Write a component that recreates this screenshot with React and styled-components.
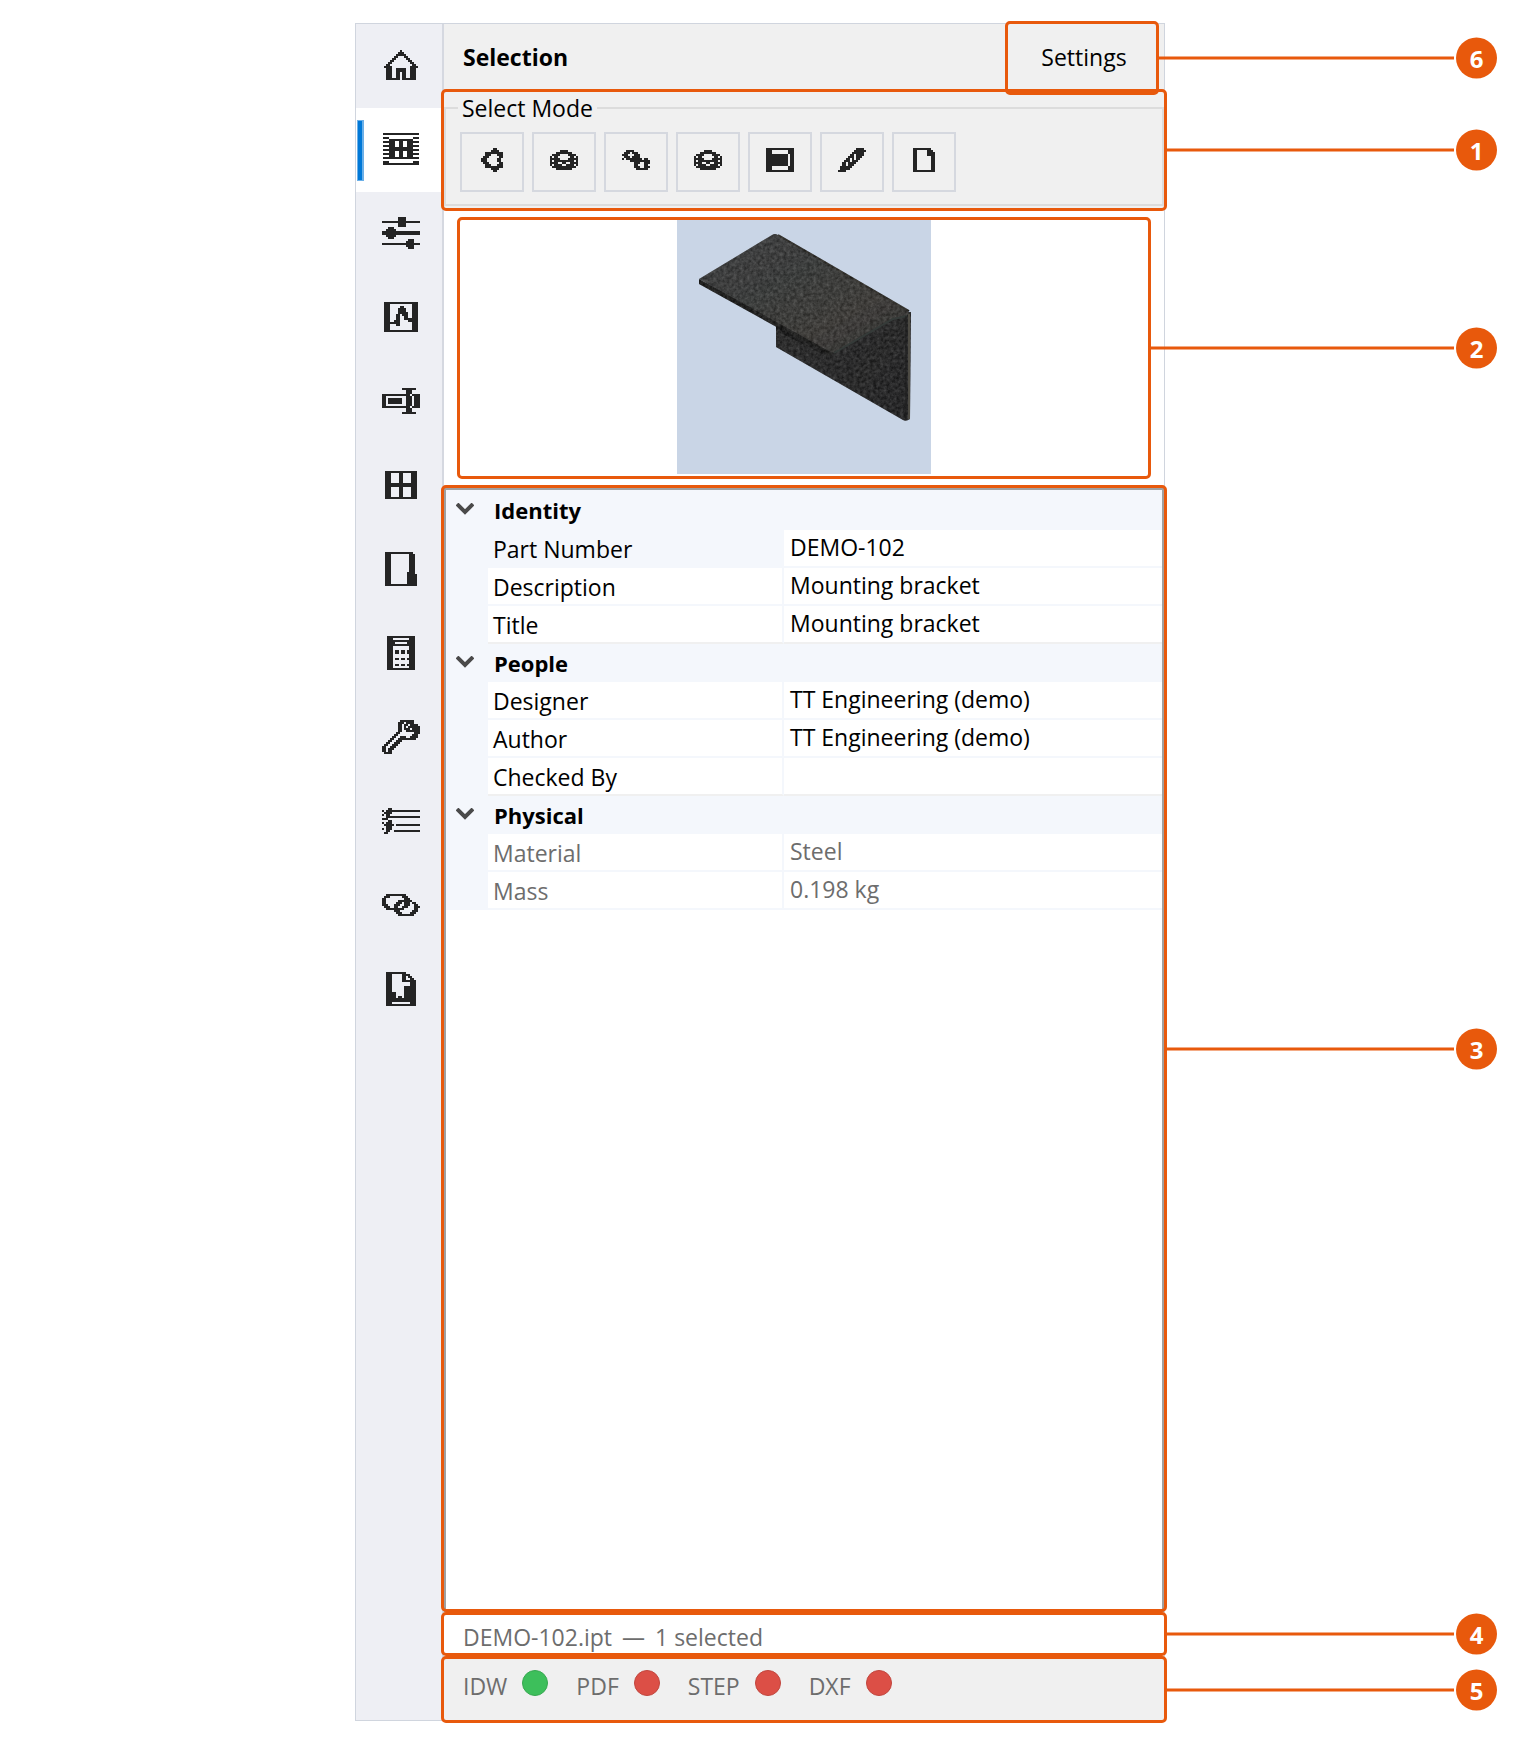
import React from "react";
import styled, { createGlobalStyle } from "styled-components";

const ORANGE = "#e8590c";
const FONT = '"Open Sans", "Noto Sans", sans-serif';

const GlobalStyle = createGlobalStyle`
  *, *::before, *::after { box-sizing: border-box; }
  body { margin: 0; background: #fff; color: #000; font: 23px/30px ${FONT}; }
  button { font: inherit; color: inherit; cursor: pointer; }
`;

/* Each icon is a one-bit glyph: "#" is an inked cell. */
const GLYPHS = {
  home: `
........#........
.......###.......
......#####......
.....##...##.....
....##.....##....
...##.......##...
..##.........##..
.##...........##.
####.........####
.###..#####..###.
.###..#####..###.
.###..##.##..###.
.###..##.##..###.
.###..##.##..###.
.#######.#######.`,
  selection: `
##################
..................
###............###
...############...
######..##..######
...###..##..###...
######..##..######
...############...
##################
...###..##..###...
######..##..######
...###..##..###...
##################
..................
###............###
##################`,
  sliders: `
........####.......
........####.......
###################
........####.......
........####.......
...###.............
..#####............
###################
###################
..#####............
...###.............
.............###...
............####...
###################
............####...
.............###...`,
  chart: `
#################
###...........###
###.....##....###
###....####...###
###....####...###
###....#####..###
###...##.###..###
###...##..##..###
###...##..#######
###..###....#####
########......###
###...##......###
###...........###
###...........###
#################`,
  rename: `
..........#######..
............###....
............###....
##############.####
##..........###.###
##.#######..###.###
##.#######..###.###
##.#######..###.###
##..........###.###
##############.####
............###....
............###....
..........#######..`,
  grid: `
################
###....##....###
###....##....###
###....##....###
###....##....###
###....##....###
################
################
###....##....###
###....##....###
###....##....###
###....##....###
###....##....###
################`,
  sheet: `
##############..
###.........###.
###.........###.
###.........###.
###.........###.
###.........###.
###.........###.
###.........###.
###.........###.
###.........###.
###........####.
###........#####
###........#####
###........#####
###........#####
###........#####
################`,
  calculator: `
##############
###........###
##############
####......####
##############
###........###
###........###
###.##.##.####
###.##.##.####
###........###
###........###
###.##.##.####
###........###
###........###
###.##.##.####
###........###
##############`,
  wrench: `
.........#######...
........###.####...
........##.##.####.
........##.#.######
........##.###.####
........##..#######
.......##.......###
......##.......###.
.....##..###..####.
....##..#########..
...##..###.........
..##..###..........
.##..###...........
##..###............
##.###.............
##.##..............
.####..............`,
  list: `
...##..............
#.#################
.####..............
#.##...............
..#################
###................
...##..............
#.###..............
.#####.############
..###..............
#.###..............
..##..#############
.##................`,
  link: `
..##########.......
.###......###......
##.........###.....
##......#######....
##.....###.###.##..
###...###..###..##.
.###..##..###...###
..#########.....##.
......###......###.
.......###....###..
........########...`,
  report: `
##########.....
###.....####...
###.....##.##..
###.....##..##.
###.....#######
###.........###
###.........###
###......######
###......######
###......######
#####....######
#####....######
#####.##.######
###############
###############
###.........###
###############`,
  part: `
......##...
.....####..
..#########
..###...###
.###.....##
###.....##.
###.....##.
.###.....##
..###...###
..#########
.....####..
......##...`,
  stack: `
.....####.....
...########...
.####....####.
#.##......##.#
#####....#####
#.##########.#
####..##..####
#.####..####.#
.############.
...########...`,
  chain: `
..####........
.###.###......
###...###.....
.###.####.....
#.########.##.
....##########
......###..###
......##...##.
......###..###
.......######.`,
  film: `
##############
###........###
###........###
###########.##
###########.##
###########.##
###########.##
###########.##
###########.##
###........###
###........###
##############`,
  pencil: `
.........####.
........######
.......######.
......##.####.
.....###.###..
....##.#.##...
...###.###....
..##.####.....
..##.###......
.######.......
.#####........
####..........`,
  page: `
#########..
##.....###.
##.....####
##.....####
##.......##
##.......##
##.......##
##.......##
##.......##
##.......##
##.......##
###########`,
};

const Glyph = styled.svg`
  display: block;
  flex: none;
  fill: #242424;
  shape-rendering: crispEdges;
`;

function Icon({ name }) {
  const rows = GLYPHS[name].trim().split("\n");
  const width = rows[0].length;
  let d = "";
  rows.forEach((row, y) => {
    for (const run of row.matchAll(/#+/g)) {
      d += `M${run.index} ${y}h${run[0].length}v1h-${run[0].length}z`;
    }
  });
  return (
    <Glyph width={width * 2} height={rows.length * 2} viewBox={`0 0 ${width} ${rows.length}`} aria-hidden="true">
      <path d={d} />
    </Glyph>
  );
}

/* ---- Numbered callouts laid over the regions ---- */
const CalloutBox = styled.div`
  position: absolute;
  inset: ${(p) => p.$inset};
  border: 3px solid ${ORANGE};
  border-radius: 5px;
  pointer-events: none;
  z-index: 1;
`;
const Leader = styled.div`
  position: absolute;
  left: 100%;
  top: 50%;
  transform: translateY(-50%);
  display: flex;
  align-items: center;
  gap: 2px;
`;
const LeaderLine = styled.span`
  width: ${(p) => p.$reach}px;
  height: 3px;
  background: ${ORANGE};
`;
const Badge = styled.span`
  width: 41px;
  height: 41px;
  border-radius: 50%;
  background: ${ORANGE};
  color: #fff;
  font-size: 24px;
  font-weight: 700;
  line-height: 42px;
  text-align: center;
`;

function Callout({ number, inset, reach = 290 }) {
  return (
    <CalloutBox $inset={inset}>
      <Leader>
        <LeaderLine $reach={reach} />
        <Badge>{number}</Badge>
      </Leader>
    </CalloutBox>
  );
}

/* ---- Window frame ---- */
const Page = styled.div`
  padding: 23px 355px;
`;
const Panel = styled.div`
  display: flex;
  min-height: calc(100vh - 46px);
  border: 1px solid #d0d5de;
`;
const Nav = styled.nav`
  flex: none;
  width: 88px;
  background: #eeeff4;
  border-right: 2px solid #d5d8e0;
`;
const NavButton = styled.button`
  display: flex;
  align-items: center;
  justify-content: center;
  width: 100%;
  height: 84px;
  padding: 0 0 2px 3px;
  border: 0;
  position: relative;
  background: ${(p) => (p.$active ? "#fff" : "transparent")};
  &::before {
    content: "";
    display: ${(p) => (p.$active ? "block" : "none")};
    position: absolute;
    left: 1px;
    top: 12px;
    bottom: 11px;
    width: 7px;
    background: #0078d7;
    border: solid #6cb0e8;
    border-width: 1px 2px 1px 1px;
  }
`;
const Main = styled.main`
  flex: 1;
  min-width: 0;
  display: flex;
  flex-direction: column;
`;

const Header = styled.header`
  display: flex;
  justify-content: space-between;
  height: 66px;
  padding: 0 8px 0 19px;
  background: #f0f0f0;
`;
const Title = styled.h1`
  margin: 0;
  font-size: 23px;
  font-weight: 700;
  line-height: 66px;
`;
const SettingsSlot = styled.div`
  position: relative;
  display: flex;
  z-index: 2;
`;
const SettingsButton = styled.button`
  width: 148px;
  padding: 0 0 0 4px;
  border: 0;
  background: transparent;
`;

/* ---- Select mode ---- */
const ModeSection = styled.section`
  position: relative;
  padding: 3px 0 5px;
  background: #f0f0f0;
`;
const ModeGroup = styled.fieldset`
  margin: 0;
  padding: 9px 14px 12px;
  border: 2px solid #dcdcdc;
  min-width: 0;
`;
const ModeLegend = styled.legend`
  padding: 0 4px;
  margin-left: -2px;
`;
const ModeButtons = styled.div`
  display: flex;
  gap: 8px;
`;
const ModeButton = styled.button`
  display: flex;
  align-items: center;
  justify-content: center;
  width: 64px;
  height: 60px;
  padding: 0 0 4px;
  border: 2px solid #d5d8df;
  background: #f0f0f0;
`;

/* ---- Preview ---- */
const PreviewSection = styled.section`
  position: relative;
  display: flex;
  justify-content: center;
  padding: 9px 0 11px;
  background: #fff;
`;
const Thumbnail = styled.svg`
  display: block;
  background: #c9d5e6;
`;

function BracketPreview() {
  return (
    <Thumbnail width="254" height="254" viewBox="0 0 254 254" role="img" aria-label="Mounting bracket preview">
      <defs>
        <linearGradient id="topFace" x1="0" y1="0" x2="1" y2="1">
          <stop offset="0" stopColor="#3e3e40" />
          <stop offset="0.4" stopColor="#383a39" />
          <stop offset="0.7" stopColor="#3d3a37" />
          <stop offset="1" stopColor="#2b2d2c" />
        </linearGradient>
        <linearGradient id="sideFace" x1="0" y1="0" x2="1" y2="0.6">
          <stop offset="0" stopColor="#272727" />
          <stop offset="1" stopColor="#1f1f20" />
        </linearGradient>
        <filter id="steel" x="0" y="0" width="100%" height="100%" colorInterpolationFilters="sRGB">
          <feTurbulence type="fractalNoise" baseFrequency="0.3" numOctaves="3" seed="4" result="grain" />
          <feColorMatrix in="grain" type="matrix" values="1 0 0 0 -0.2  1 0 0 0 -0.2  1 0 0 0 -0.2  0 0 0 0 0.24" result="tint" />
          <feComposite in="tint" in2="SourceAlpha" operator="in" result="clipped" />
          <feMerge>
            <feMergeNode in="SourceGraphic" />
            <feMergeNode in="clipped" />
          </feMerge>
        </filter>
      </defs>
      <g filter="url(#steel)">
        <path d="M99 100L99 127L226 200Q229 202 233 199L234 92L200 90Z" fill="url(#sideFace)" />
        <path d="M22 59L22 64L152 136L160 131Z" fill="#171716" />
        <path d="M22 59L95 15Q98 13 101 15L230 90Q234 93 229 96L216 99L157 133L150 130Z" fill="url(#topFace)" />
        <path d="M99 106L148 132L152 137L99 111Z" fill="#131313" />
        <path d="M101 15L232 91" stroke="#2a2823" strokeWidth="2" fill="none" />
      </g>
      <path d="M157 133L216 99L230 96" stroke="#353b39" strokeWidth="2" fill="none" />
      <path d="M232 94V199" stroke="#4c4a43" strokeWidth="2" fill="none" />
      <path d="M229 96V200" stroke="#1d1d1c" strokeWidth="1" fill="none" />
    </Thumbnail>
  );
}

/* ---- Property grid ---- */
const PropertySection = styled.section`
  position: relative;
  flex: 1;
  display: flex;
  padding-top: 3px;
`;
const PropertyFrame = styled.div`
  flex: 1;
  border: 2px solid #a0a0a0;
  background: #fff;
`;
const PropertyTable = styled.table`
  width: 100%;
  table-layout: fixed;
  border-collapse: separate;
  border-spacing: 0;
  background: #f4f7fc;
`;
const GutterCol = styled.col`
  width: 42px;
`;
const LabelCol = styled.col`
  width: 296px;
`;
const CategoryCell = styled.th`
  height: ${(p) => (p.$first ? 40 : 38)}px;
  padding: 0;
  text-align: left;
  font-weight: 700;
`;
const CategoryToggle = styled.button`
  display: flex;
  align-items: center;
  gap: 20px;
  padding: 0 0 0 10px;
  border: 0;
  background: transparent;
  font-size: 22px;
`;
const Chevron = styled.svg`
  display: block;
  fill: none;
  stroke: #4a4a4a;
  stroke-width: 4;
  margin-bottom: 2px;
`;
const Gutter = styled.td`
  padding: 0;
`;
const GroupBody = styled.tbody`
  &:not(:last-child) > tr:last-child > td,
  &:not(:last-child) > tr:last-child > th {
    border-bottom-color: #f0f0f0;
  }
`;
const PropertyName = styled.th`
  height: 38px;
  padding: 1px 0 0 5px;
  border-right: 2px solid #f4f7fc;
  border-bottom: 2px solid #f4f7fc;
  background: ${(p) => (p.$selected ? "#f4f7fc" : "#fff")};
  color: ${(p) => (p.$muted ? "#6d6d6d" : "#000")};
  text-align: left;
  font-weight: 400;
`;
const PropertyValue = styled.td`
  height: 38px;
  padding: 0 0 2px 6px;
  border-bottom: 2px solid #f4f7fc;
  background: #fff;
  color: ${(p) => (p.$muted ? "#6d6d6d" : "#000")};
`;

const GROUPS = [
  {
    name: "Identity",
    rows: [
      { label: "Part Number", value: "DEMO-102", selected: true },
      { label: "Description", value: "Mounting bracket" },
      { label: "Title", value: "Mounting bracket" },
    ],
  },
  {
    name: "People",
    rows: [
      { label: "Designer", value: "TT Engineering (demo)" },
      { label: "Author", value: "TT Engineering (demo)" },
      { label: "Checked By", value: "" },
    ],
  },
  {
    name: "Physical",
    rows: [
      { label: "Material", value: "Steel", muted: true },
      { label: "Mass", value: "0.198 kg", muted: true },
    ],
  },
];

/* ---- Status and exports ---- */
const StatusBar = styled.div`
  position: relative;
  display: flex;
  gap: 10px;
  height: 44px;
  padding: 10px 0 0 19px;
  background: #fff;
  color: #6d6d6d;
`;
const ExportBar = styled.footer`
  position: relative;
  display: flex;
  gap: 28px;
  height: 64px;
  padding: 14px 0 0 19px;
  background: #f0f0f0;
  color: #6d6d6d;
`;
const ExportItem = styled.div`
  display: flex;
  align-items: flex-start;
  gap: 15px;
`;
const ExportLabel = styled.span`
  padding-top: 1px;
`;
const Dot = styled.span`
  width: 26px;
  height: 26px;
  border-radius: 50%;
  background: ${(p) => (p.$ok ? "#3dbf5b" : "#dc4f46")};
  border: 1px solid ${(p) => (p.$ok ? "#36a850" : "#c1453d")};
`;

const NAV = [
  ["home", "Home"],
  ["selection", "Selection"],
  ["sliders", "Parameters"],
  ["chart", "Analysis"],
  ["rename", "Rename"],
  ["grid", "Tables"],
  ["sheet", "Sheets"],
  ["calculator", "Calculator"],
  ["wrench", "Tools"],
  ["list", "Checklist"],
  ["link", "Links"],
  ["report", "Export"],
];
const MODES = [
  ["part", "Parts"],
  ["stack", "Bodies"],
  ["chain", "Components"],
  ["stack", "Layers"],
  ["film", "Faces"],
  ["pencil", "Sketches"],
  ["page", "Documents"],
];
const EXPORTS = [
  ["IDW", true],
  ["PDF", false],
  ["STEP", false],
  ["DXF", false],
];

export default function App() {
  return (
    <>
      <GlobalStyle />
      <Page>
        <Panel>
          <Nav>
            {NAV.map(([icon, label]) => (
              <NavButton key={icon} type="button" aria-label={label} $active={icon === "selection"}>
                <Icon name={icon} />
              </NavButton>
            ))}
          </Nav>
          <Main>
            <Header>
              <Title>Selection</Title>
              <SettingsSlot>
                <SettingsButton type="button">Settings</SettingsButton>
                <Callout number={6} inset="-3px -3px -5px" reach={298} />
              </SettingsSlot>
            </Header>

            <ModeSection>
              <ModeGroup>
                <ModeLegend>Select Mode</ModeLegend>
                <ModeButtons>
                  {MODES.map(([icon, label]) => (
                    <ModeButton key={label} type="button" aria-label={label}>
                      <Icon name={icon} />
                    </ModeButton>
                  ))}
                </ModeButtons>
              </ModeGroup>
              <Callout number={1} inset="-1px -3px 0" />
            </ModeSection>

            <PreviewSection>
              <BracketPreview />
              <Callout number={2} inset="6px 13px" reach={306} />
            </PreviewSection>

            <PropertySection>
              <PropertyFrame>
                <PropertyTable>
                  <colgroup>
                    <GutterCol />
                    <LabelCol />
                    <col />
                  </colgroup>
                  {GROUPS.map((group, i) => (
                    <GroupBody key={group.name}>
                      <tr>
                        <CategoryCell colSpan={3} scope="rowgroup" $first={i === 0}>
                          <CategoryToggle type="button" aria-expanded="true">
                            <Chevron width="18" height="12" viewBox="0 0 18 12" aria-hidden="true">
                              <path d="M1 1L9 9L17 1" />
                            </Chevron>
                            {group.name}
                          </CategoryToggle>
                        </CategoryCell>
                      </tr>
                      {group.rows.map((row) => (
                        <tr key={row.label}>
                          <Gutter />
                          <PropertyName scope="row" $selected={row.selected} $muted={row.muted}>
                            {row.label}
                          </PropertyName>
                          <PropertyValue $muted={row.muted}>{row.value}</PropertyValue>
                        </tr>
                      ))}
                    </GroupBody>
                  ))}
                </PropertyTable>
              </PropertyFrame>
              <Callout number={3} inset="0 -3px" />
            </PropertySection>

            <StatusBar>
              <span>DEMO-102.ipt</span>
              <span>—</span>
              <span>1 selected</span>
              <Callout number={4} inset="0 -3px" />
            </StatusBar>
            <ExportBar>
              {EXPORTS.map(([label, ok]) => (
                <ExportItem key={label}>
                  <ExportLabel>{label}</ExportLabel>
                  <Dot $ok={ok} role="img" aria-label={ok ? "up to date" : "missing"} />
                </ExportItem>
              ))}
              <Callout number={5} inset="0 -3px -3px" />
            </ExportBar>
          </Main>
        </Panel>
      </Page>
    </>
  );
}
